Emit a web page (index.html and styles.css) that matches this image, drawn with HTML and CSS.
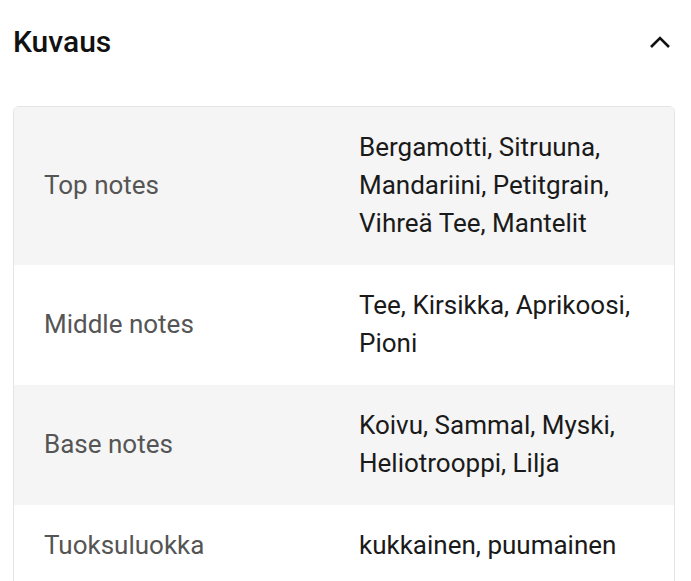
FILE: index.html
```html
<!DOCTYPE html>
<html lang="fi">
<head>
<meta charset="utf-8">
<link rel="stylesheet" href="styles.css">
</head>
<body>
<section class="panel">
  <header class="panel-head">
    <h2 class="panel-title">Kuvaus</h2>
    <svg class="chevron" width="22" height="14" viewBox="0 0 22 14" aria-hidden="true">
      <path d="M2 12 L11 3 L20 12" fill="none" stroke="#111" stroke-width="2.6"/>
    </svg>
  </header>
  <div class="card">
    <div class="row shaded">
      <div class="label">Top notes</div>
      <div class="value">Bergamotti, Sitruuna,<br>Mandariini, Petitgrain,<br>Vihreä Tee, Mantelit</div>
    </div>
    <div class="row">
      <div class="label">Middle notes</div>
      <div class="value">Tee, Kirsikka, Aprikoosi,<br>Pioni</div>
    </div>
    <div class="row shaded">
      <div class="label">Base notes</div>
      <div class="value">Koivu, Sammal, Myski,<br>Heliotrooppi, Lilja</div>
    </div>
    <div class="row">
      <div class="label">Tuoksuluokka</div>
      <div class="value">kukkainen, puumainen</div>
    </div>
  </div>
</section>
</body>
</html>
```
FILE: styles.css
```css
html, body {
  margin: 0;
  padding: 0;
  background: #fff;
}
body {
  font-family: Roboto, "Liberation Sans", sans-serif;
  color: #1a1a1a;
}
.panel {
  padding: 0 16px 0 13px;
}
.panel-head {
  display: flex;
  align-items: center;
  justify-content: space-between;
  height: 83px;
}
.panel-title {
  margin: 0;
  font-size: 30px;
  font-weight: 500;
  color: #111;
}
.chevron {
  margin-right: 4px;
}
.card {
  margin-top: 23px;
  border: 1px solid #e4e4e4;
  border-radius: 6px;
  overflow: hidden;
}
.row {
  display: grid;
  grid-template-columns: 345px 1fr;
  align-items: center;
  padding: 21px 0 23px;
  font-size: 26px;
  line-height: 38px;
}
.row.shaded {
  background: #f5f5f5;
}
.label {
  padding-left: 30px;
  color: #555;
}
.value {
  color: #1a1a1a;
}
```
